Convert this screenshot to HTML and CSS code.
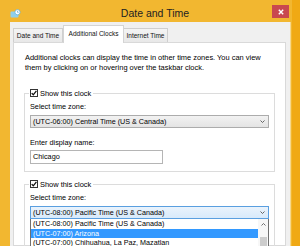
FILE: index.html
```html
<!DOCTYPE html>
<html lang="en">
<head>
  <meta charset="UTF-8">
  <title>Date and Time</title>
  <link rel="stylesheet" href="styles.css">
</head>
<body>
  <div class="window">
    <div class="titlebar">
      <svg class="app-icon" width="11" height="9" viewBox="0 0 11 9">
        <rect x="0.5" y="2.5" width="8" height="6" rx="1" fill="#8fcfea"/>
        <circle cx="7.5" cy="3.2" r="2.6" fill="#fff" stroke="#5fb0d8" stroke-width="0.8"/>
        <path d="M7.5 1.8V3.3H8.7" fill="none" stroke="#4a8fb8" stroke-width="0.6"/>
      </svg>
      <div class="title">Date and Time</div>
      <div class="close">
        <svg width="6" height="6" viewBox="0 0 6 6"><path d="M0.8 0.8L5.2 5.2M5.2 0.8L0.8 5.2" stroke="#fff" stroke-width="1.4"/></svg>
      </div>
    </div>

    <div class="client">
      <div class="tabs">
        <div class="tab tab-date">Date and Time</div>
        <div class="tab tab-clocks active">Additional Clocks</div>
        <div class="tab tab-internet">Internet Time</div>
      </div>

      <div class="panel">
        <p class="intro">Additional clocks can display the time in other time zones. You can view them by clicking on or hovering over the taskbar clock.</p>

        <fieldset class="group">
          <legend>
            <span class="check"><svg width="6" height="6" viewBox="0 0 6 6"><path d="M0.7 3.1L2.3 4.8L5.4 0.9" fill="none" stroke="#111" stroke-width="1.3"/></svg></span>
            Show this clock
          </legend>
          <div class="label">Select time zone:</div>
          <div class="combo">
            <span>(UTC-06:00) Central Time (US &amp; Canada)</span>
            <svg width="5" height="3" viewBox="0 0 5 3"><path d="M0.5 0.5L2.5 2.5L4.5 0.5" fill="none" stroke="#555" stroke-width="0.9"/></svg>
          </div>
          <div class="label label-name">Enter display name:</div>
          <div class="textbox">Chicago</div>
        </fieldset>

        <fieldset class="group group-second">
          <legend>
            <span class="check"><svg width="6" height="6" viewBox="0 0 6 6"><path d="M0.7 3.1L2.3 4.8L5.4 0.9" fill="none" stroke="#111" stroke-width="1.3"/></svg></span>
            Show this clock
          </legend>
          <div class="label">Select time zone:</div>
          <div class="combo open">
            <span>(UTC-08:00) Pacific Time (US &amp; Canada)</span>
            <svg width="5" height="3" viewBox="0 0 5 3"><path d="M0.5 0.5L2.5 2.5L4.5 0.5" fill="none" stroke="#555" stroke-width="0.9"/></svg>
          </div>
          <div class="dropdown">
            <div class="options">
              <div class="option">(UTC-08:00) Pacific Time (US &amp; Canada)</div>
              <div class="option selected">(UTC-07:00) Arizona</div>
              <div class="option">(UTC-07:00) Chihuahua, La Paz, Mazatlan</div>
            </div>
            <div class="scrollbar">
              <svg width="5" height="3" viewBox="0 0 5 3"><path d="M0.5 2.5L2.5 0.5L4.5 2.5" fill="none" stroke="#606060" stroke-width="0.9"/></svg>
              <div class="thumb"></div>
            </div>
          </div>
        </fieldset>
      </div>
    </div>
  </div>
</body>
</html>
```

FILE: styles.css
```css
body {
  margin: 0;
  background-color: #f0a914;
  font-family: "Liberation Sans", Arial, sans-serif;
  color: #000;
}
.window {
  width: 292px;
  height: 246px;
  display: flex;
  flex-direction: column;
  background-color: #f2b730;
  overflow: hidden;
}
.titlebar {
  height: 22px;
  display: flex;
  flex-shrink: 0;
}
.app-icon {
  margin: 9px 0 0 10px;
}
.title {
  flex: 1;
  margin-top: 7px;
  padding-left: 17px;
  line-height: 12px;
  font-size: 10.5px;
  text-align: center;
  color: #222;
}
.close {
  width: 17px;
  height: 13px;
  margin: 5px 3px 0 0;
  background-color: #c9484f;
  display: flex;
  align-items: center;
  justify-content: center;
}
.client {
  flex: 1;
  margin: 0 1px 0 10px;
  padding: 3px 4px 0 3px;
  background-color: #f0f0f0;
  border-right: 1px solid #f7d88c;
  display: flex;
  flex-direction: column;
  min-height: 0;
}
.tabs {
  height: 17px;
  display: flex;
  align-items: flex-end;
  flex-shrink: 0;
}
.tab {
  height: 13px;
  border: 1px solid #cfcfcf;
  border-bottom: none;
  background: linear-gradient(#f4f4f4, #e8e8e8);
  font-size: 6.5px;
  line-height: 13px;
  text-align: center;
  color: #111;
}
.tab-date { width: 48px; }
.tab-clocks { width: 59px; }
.tab-internet { width: 43px; border-left: none; }
.tab.active {
  height: 17px;
  line-height: 16px;
  background: #fff;
  border-color: #d4d4d4;
  margin-bottom: -1px;
  position: relative;
}
.panel {
  flex: 1;
  background-color: #fff;
  border: 1px solid #d9d9d9;
  padding: 10px 10px 0 10px;
  min-height: 0;
}
.intro {
  margin: 0 0 15px 1px;
  font-size: 7.45px;
  line-height: 10px;
}
.group {
  margin: 0;
  min-width: 0;
  border: 1px solid #dcdcdc;
  padding: 0 5px 7px 5px;
}
.group-second {
  margin-top: 7px;
}
.group legend {
  margin-left: -1px;
  padding: 0 2px 0 1px;
  height: 10px;
  display: flex;
  align-items: center;
  font-size: 7.45px;
}
.check {
  width: 6px;
  height: 6px;
  border: 1px solid #333;
  background: #fff;
  margin-right: 2px;
  display: flex;
  align-items: center;
  justify-content: center;
}
.label {
  margin-top: 4px;
  font-size: 7.3px;
  line-height: 10px;
}
.label-name {
  margin-top: 10px;
}
.combo {
  margin-top: 3px;
  height: 11px;
  border: 1px solid #acacac;
  background: linear-gradient(#f2f2f2, #e4e4e4);
  padding: 0 3px 0 2px;
  display: flex;
  align-items: center;
  justify-content: space-between;
  font-size: 7.2px;
}
.combo.open {
  border-color: #5a9fe0;
  background: linear-gradient(#eaf3fc, #d8eafb);
}
.textbox {
  margin-top: 2px;
  width: 129px;
  height: 12px;
  border: 1px solid #b5b5b5;
  background: #fff;
  padding-left: 2px;
  font-size: 7.3px;
  line-height: 12px;
}
.dropdown {
  height: 40px;
  border: 1px solid #707070;
  border-top: none;
  background: #fff;
  display: flex;
}
.options {
  flex: 1;
  font-size: 7.2px;
  line-height: 9.5px;
}
.option {
  padding-left: 2px;
}
.option.selected {
  background-color: #3399ff;
  color: #fff;
}
.scrollbar {
  width: 10px;
  background: #f7f7f7;
  display: flex;
  flex-direction: column;
  align-items: center;
}
.scrollbar svg {
  margin-top: 4px;
}
.thumb {
  margin-top: 11px;
  width: 7px;
  flex: 1;
  background-color: #cdcdcd;
}
```
